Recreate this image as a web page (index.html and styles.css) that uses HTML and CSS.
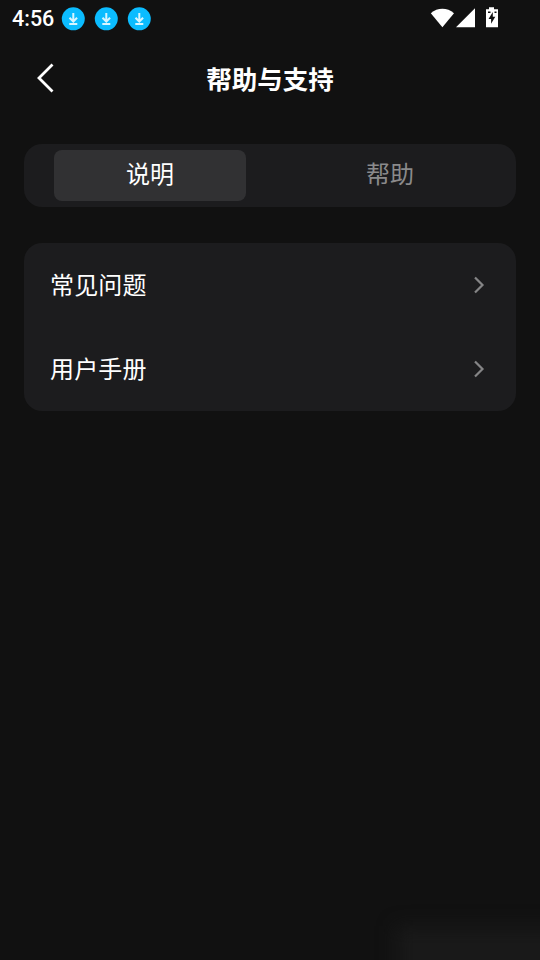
FILE: index.html
```html
<!DOCTYPE html>
<html lang="zh-CN">
<head>
<meta charset="utf-8">
<title>帮助与支持</title>
<link rel="stylesheet" href="styles.css">
</head>
<body>
<div class="screen">
  <div class="status">
    <span class="time">4:56</span>
    <div class="downloads">
      <svg width="24" height="24" viewBox="0 0 24 24"><circle cx="12.300" cy="11.800" r="11.500"/><path d="M12.300 6v8.500M8.500 10.700l3.800 3.800 3.800-3.800M8.300 17h8"/></svg>
      <svg width="24" height="24" viewBox="0 0 24 24"><circle cx="12.300" cy="11.800" r="11.500"/><path d="M12.300 6v8.500M8.500 10.700l3.800 3.800 3.800-3.800M8.300 17h8"/></svg>
      <svg width="24" height="24" viewBox="0 0 24 24"><circle cx="12.300" cy="11.800" r="11.500"/><path d="M12.300 6v8.500M8.500 10.700l3.800 3.800 3.800-3.800M8.300 17h8"/></svg>
    </div>
    <svg class="system" width="68" height="22" viewBox="0 0 68 22" fill="#fff"><path d="M.8 6.200C7.600.4 17.200.4 24 6.200L12.400 20.200z"/><path d="M26 20.200 45 1.200v19z"/><path fill-rule="evenodd" d="M56 2.300h3V.3h5v2h4v17.900H56zM62.800 5l-4.300 7h2.600v4.700l4.200-7h-2.500zM58 4.500v1.500h2.500V4.500zM64.500 4.500v1.500h2V4.500z"/></svg>
  </div>
  <header class="header">
    <button class="back" aria-label="返回"><svg width="20" height="32" viewBox="0 0 20 32"><path d="M16.500 2.500 3 16l13.500 13.500"/></svg></button>
    <h1>帮助与支持</h1>
  </header>
  <main>
    <div class="tabs">
      <div class="cell"><button class="tab active">说明</button></div>
      <div class="cell"><button class="tab">帮助</button></div>
    </div>
    <div class="list">
      <div class="item"><span>常见问题</span><svg width="12" height="18" viewBox="0 0 12 18"><path d="M2 1.500 9.500 9 2 16.500"/></svg></div>
      <div class="item"><span>用户手册</span><svg width="12" height="18" viewBox="0 0 12 18"><path d="M2 1.500 9.500 9 2 16.500"/></svg></div>
    </div>
  </main>
  <div class="glow"></div>
</div>
</body>
</html>
```
FILE: styles.css
```css
* { box-sizing: border-box; }
body { margin: 0; background: #111; color: #fff; font-family: "Noto Sans CJK SC", sans-serif; }
button { border: 0; padding: 0; background: none; color: inherit; font: inherit; }
svg { display: block; }
.screen { position: relative; width: 540px; height: 960px; overflow: hidden; }
.status { display: flex; align-items: center; height: 37px; padding: 0 42px 0 12px; }
.time { width: 49px; font: 500 21.5px/37px Roboto, sans-serif; }
.downloads { display: flex; gap: 9px; }
.downloads circle { fill: #0bbcff; }
.downloads path { fill: none; stroke: #d8f5ff; stroke-width: 2; }
.system { margin: -2px 0 0 auto; }
.header { display: grid; grid-template-columns: 48px 1fr 48px; align-items: center; height: 82px; padding: 0 24px; }
.back { padding-left: 12px; }
.back path { fill: none; stroke: #fff; stroke-width: 2.8; }
h1 { margin: 0; text-align: center; font-size: 25.5px; line-height: 38px; font-weight: 700; }
main { padding: 25px 24px 0; }
.tabs { display: grid; grid-template-columns: 1fr 1fr; height: 63px; padding: 6px 6px; border-radius: 18px; background: #1c1c1e; }
.cell { display: flex; justify-content: center; }
.tab { width: 192px; height: 51px; padding-bottom: 5px; border-radius: 8px; font-size: 24px; line-height: 46px; color: #8a8a8b; }
.active { background: #313133; color: #fff; }
.list { margin-top: 36px; border-radius: 18px; background: #1c1c1e; }
.item { display: flex; align-items: center; justify-content: space-between; height: 84px; padding: 0 31px 0 26px; font-size: 24px; }
.item span { margin-top: -4px; letter-spacing: .15px; }
.item path { fill: none; stroke: #858586; stroke-width: 2.2; }
.glow { position: absolute; left: 396px; top: 926px; width: 170px; height: 60px; background: #191919; filter: blur(9px); }
```
